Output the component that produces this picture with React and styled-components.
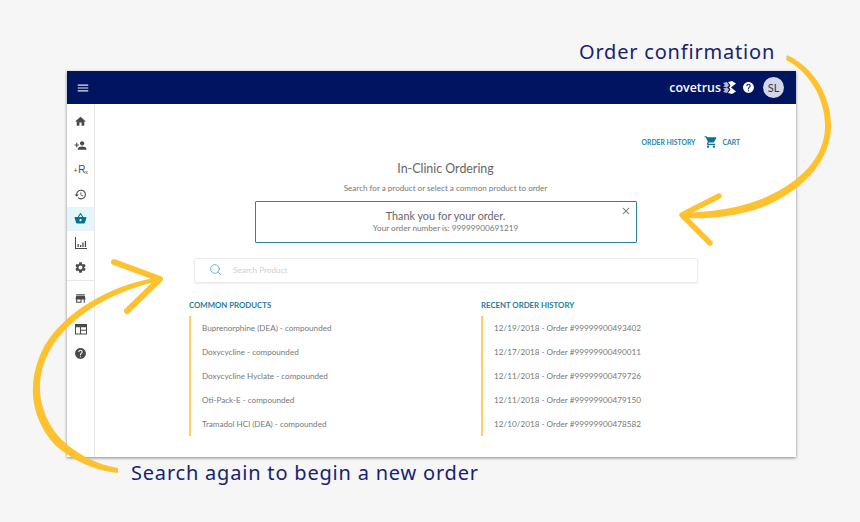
import React from "react";
import styled, { createGlobalStyle } from "styled-components";
import {
  MdMenu,
  MdHome,
  MdPersonAdd,
  MdHistory,
  MdShoppingBasket,
  MdSettings,
  MdStore,
  MdHelp,
  MdShoppingCart,
  MdClose,
} from "react-icons/md";
import { Search } from "lucide-react";

const commonProducts = [
  "Buprenorphine (DEA) - compounded",
  "Doxycycline - compounded",
  "Doxycycline Hyclate - compounded",
  "Oti-Pack-E - compounded",
  "Tramadol HCl (DEA) - compounded",
];

const recentOrders = [
  "12/19/2018 - Order #99999900493402",
  "12/17/2018 - Order #99999900490011",
  "12/11/2018 - Order #99999900479726",
  "12/11/2018 - Order #99999900479150",
  "12/10/2018 - Order #99999900478582",
];

const GlobalStyle = createGlobalStyle`
  html, body {
    margin: 0;
    background: #f6f6f6;
  }
  * {
    box-sizing: border-box;
  }
`;

const Stage = styled.div`
  position: relative;
  width: 860px;
  height: 522px;
  padding: 71px 64px 0 67px;
  overflow: hidden;
  background: #f6f6f6;
  font-family: Lato, "Noto Sans", sans-serif;
`;

const Window = styled.div`
  display: flex;
  flex-direction: column;
  width: 729px;
  height: 386px;
  background: #fff;
  box-shadow: 0 1px 3px rgba(0, 0, 0, 0.45);
`;

const Header = styled.header`
  display: flex;
  align-items: center;
  height: 33px;
  padding: 0 12px 0 9px;
  background: #00145f;
  color: #fff;
`;

const MenuButton = styled.div`
  display: flex;
  font-size: 14px;
  color: #e4e7f2;
`;

const Brand = styled.div`
  display: flex;
  align-items: center;
  gap: 2px;
  margin-left: auto;
  font-family: "Open Sans", sans-serif;
  font-size: 12.4px;
  font-weight: 600;
`;

const HeaderHelp = styled.div`
  display: flex;
  margin-left: 6px;
  font-size: 13px;
`;

const Avatar = styled.div`
  display: flex;
  align-items: center;
  justify-content: center;
  width: 21px;
  height: 21px;
  margin-left: 8px;
  border-radius: 50%;
  background: #d5d7e6;
  color: #2c3358;
  font-size: 11px;
`;

const Body = styled.div`
  display: flex;
  flex: 1;
  min-height: 0;
`;

const Rail = styled.nav`
  display: flex;
  flex-direction: column;
  flex: none;
  width: 28px;
  padding-top: 5px;
  border-right: 1px solid #e8e8e8;
`;

const RailItem = styled.div`
  display: flex;
  align-items: center;
  justify-content: center;
  flex: none;
  height: 24.4px;
  margin-bottom: ${(p) => p.$gap || 0}px;
  background: ${(p) => (p.$active ? "#e5f6fb" : "transparent")};
  color: ${(p) => (p.$active ? "#0a6f94" : "#4a4a4a")};
  font-size: 13px;
`;

const RailDivider = styled.div`
  flex: none;
  height: 1px;
  margin-bottom: 6px;
  background: #e8e8e8;
`;

const RxMark = styled.span`
  color: #4a4a4a;
  font-family: "Liberation Sans", sans-serif;
  font-size: 10px;
  letter-spacing: -0.4px;

  small {
    font-size: 7px;
    margin-right: 1px;
  }

  sub {
    font-size: 6px;
    vertical-align: -1px;
    line-height: 0;
  }
`;

const Main = styled.main`
  display: flex;
  flex-direction: column;
  flex: 1;
  min-width: 0;
  padding-top: 31px;
  color: #666;
`;

const TopLinks = styled.div`
  display: flex;
  align-items: center;
  justify-content: flex-end;
  height: 13px;
  padding-right: 56px;
  color: #2585a5;
  font-size: 6.8px;
  font-weight: 700;
`;

const CartIcon = styled.span`
  display: flex;
  margin: 0 4px 0 9px;
  color: #0d6f93;
  font-size: 14px;
`;

const Title = styled.h1`
  margin: 13px 0 0;
  color: #666;
  font-size: 12.4px;
  font-weight: 400;
  line-height: 16px;
  text-align: center;
`;

const Subtitle = styled.p`
  margin: 5px 0 0;
  color: #777;
  font-size: 8.1px;
  line-height: 12px;
  text-align: center;
`;

const Alert = styled.div`
  position: relative;
  align-self: center;
  width: 382px;
  height: 42px;
  margin-top: 7px;
  padding-top: 7px;
  border: 1.5px solid #2d81a1;
  border-radius: 1px;
  text-align: center;
`;

const AlertTitle = styled.div`
  color: #666;
  font-size: 10.8px;
  line-height: 13px;
`;

const AlertText = styled.div`
  margin-top: 1px;
  color: #777;
  font-size: 8.2px;
  line-height: 11px;
`;

const AlertClose = styled.span`
  position: absolute;
  top: 3px;
  right: 4px;
  display: flex;
  color: #808080;
  font-size: 12px;
`;

const SearchBar = styled.div`
  display: flex;
  align-items: center;
  gap: 11px;
  width: 504px;
  height: 25px;
  margin: 15px 0 0 99px;
  padding: 0 0 2px 14px;
  border: 1px solid #ececec;
  border-radius: 2px;
  box-shadow: 0 1px 2px rgba(0, 0, 0, 0.08);
  color: #cfcfcf;
  font-size: 8.2px;
`;

const SearchIcon = styled(Search)`
  flex: none;
  color: #4a94b0;
`;

const Columns = styled.div`
  display: grid;
  grid-template-columns: 292px 1fr;
  margin: 16px 0 0 94px;
`;

const ColumnTitle = styled.h2`
  margin: 0;
  color: #1f7c9c;
  font-size: 7.8px;
  font-weight: 700;
  line-height: 12px;
`;

const List = styled.ul`
  width: 200px;
  margin: 5px 0 0;
  padding: 0 0 0 11px;
  border-left: 2px solid #fdd263;
  list-style: none;
`;

const ListItem = styled.li`
  height: 24px;
  color: #777;
  font-size: ${(p) => p.$size}px;
  line-height: 24px;
  white-space: nowrap;
`;

const Arrows = styled.svg`
  position: absolute;
  top: 0;
  left: 0;
  pointer-events: none;
`;

const HandNote = styled.div`
  position: absolute;
  top: ${(p) => p.$top}px;
  left: ${(p) => p.$left}px;
  color: #17236f;
  font-family: "Noto Sans", sans-serif;
  font-size: 20px;
  letter-spacing: ${(p) => p.$spacing}px;
  line-height: 26px;
  white-space: nowrap;
`;

const BrandMark = () => (
  <svg width="13" height="13" viewBox="0 0 13 13" fill="#fff">
    <path d="M0 2 4 1 6 4.500 4 6.500 0 5.500 2 4Z" opacity=".7" />
    <path d="M0 7.500 4 6.500 6 8.500 4 12 0 11 2 9Z" opacity=".7" />
    <path d="M5 1 9 0 13 2.500 8 6.500 13 10.500 9 13 5 12 7.500 8.500 6 6.500 7.500 4.500Z" />
  </svg>
);

const ChartIcon = () => (
  <svg width="12" height="12" viewBox="0 0 12 12" fill="#4a4a4a">
    <path d="M0 0h1v11h11v1H0z" />
    <path d="M2.500 7h1.300v3H2.500zM5 8h1.300v2H5zM7.300 5.500h1.300V10H7.300zM9.800 4h1.300v6H9.800z" />
  </svg>
);

const PanelIcon = () => (
  <svg width="12" height="12" viewBox="0 0 12 12" fill="#4a4a4a">
    <path
      fillRule="evenodd"
      d="M0 1h12v10.500H0zm1 3.200v6.300h4V4.200zm5 0v2.500h5V4.200zm0 3.500v2.800h5V7.700z"
    />
  </svg>
);

const App = () => {
  return (
    <>
      <GlobalStyle />
      <Stage>
        <Window>
          <Header>
            <MenuButton>
              <MdMenu />
            </MenuButton>
            <Brand>
              covetrus
              <BrandMark />
            </Brand>
            <HeaderHelp>
              <MdHelp />
            </HeaderHelp>
            <Avatar>SL</Avatar>
          </Header>
          <Body>
            <Rail>
              <RailItem>
                <MdHome />
              </RailItem>
              <RailItem>
                <MdPersonAdd />
              </RailItem>
              <RailItem>
                <RxMark>
                  <small>+</small>R<sub>x</sub>
                </RxMark>
              </RailItem>
              <RailItem>
                <MdHistory />
              </RailItem>
              <RailItem $active>
                <MdShoppingBasket />
              </RailItem>
              <RailItem>
                <ChartIcon />
              </RailItem>
              <RailItem>
                <MdSettings />
              </RailItem>
              <RailDivider />
              <RailItem $gap={6}>
                <MdStore />
              </RailItem>
              <RailItem>
                <PanelIcon />
              </RailItem>
              <RailItem>
                <MdHelp />
              </RailItem>
            </Rail>
            <Main>
              <TopLinks>
                ORDER HISTORY
                <CartIcon>
                  <MdShoppingCart />
                </CartIcon>
                CART
              </TopLinks>
              <Title>In-Clinic Ordering</Title>
              <Subtitle>Search for a product or select a common product to order</Subtitle>
              <Alert>
                <AlertTitle>Thank you for your order.</AlertTitle>
                <AlertText>Your order number is: 99999900691219</AlertText>
                <AlertClose>
                  <MdClose />
                </AlertClose>
              </Alert>
              <SearchBar>
                <SearchIcon size={13} strokeWidth={1.3} />
                Search Product
              </SearchBar>
              <Columns>
                <div>
                  <ColumnTitle>COMMON PRODUCTS</ColumnTitle>
                  <List>
                    {commonProducts.map((item) => (
                      <ListItem key={item} $size={8.1}>
                        {item}
                      </ListItem>
                    ))}
                  </List>
                </div>
                <div>
                  <ColumnTitle>RECENT ORDER HISTORY</ColumnTitle>
                  <List>
                    {recentOrders.map((item) => (
                      <ListItem key={item} $size={8.2}>
                        {item}
                      </ListItem>
                    ))}
                  </List>
                </div>
              </Columns>
            </Main>
          </Body>
        </Window>

        {/* hand drawn arrows */}
        <Arrows width="860" height="522" viewBox="0 0 860 522">
          <path
            d="M787 55 C815 68 832 98 831 128 C830 158 808 186 770 204 C740 217 710 219 682 218 L681 213 C712 212 742 208 766 197 C802 181 824 157 825 128 C826 100 810 72 786 60Z"
            fill="#fec22e"
          />
          <path
            d="M719 196 L682 215 L710 243"
            fill="none"
            stroke="#fec22e"
            strokeWidth="5.500"
            strokeLinecap="round"
            strokeLinejoin="round"
          />
          <path
            d="M160 277 C120 283 70 305 45 345 C27 378 28 415 55 445 C72 460 95 471 118 473 L118 468 C98 465 78 455 62 440 C38 415 33 380 50 350 C70 315 115 290 160 281Z"
            fill="#fec22e"
          />
          <path
            d="M114 262 L160 279 L127 311"
            fill="none"
            stroke="#fec22e"
            strokeWidth="6"
            strokeLinecap="round"
            strokeLinejoin="round"
          />
        </Arrows>
        <HandNote $top={39} $left={579} $spacing={0.8}>
          Order confirmation
        </HandNote>
        <HandNote $top={460} $left={131} $spacing={0.8}>
          Search again to begin a new order
        </HandNote>
      </Stage>
    </>
  );
};

export default App;
